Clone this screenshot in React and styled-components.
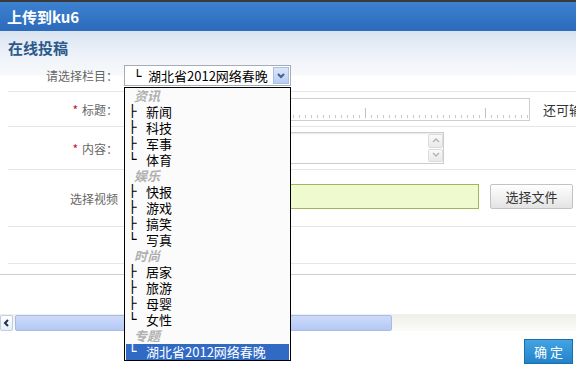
import React from 'react'
import styled, { createGlobalStyle } from 'styled-components'

const GlobalStyle = createGlobalStyle`
  html, body { margin: 0; padding: 0; background: #fff; overflow: hidden; }
  body { font-family: "Noto Sans CJK SC", "Noto Sans", sans-serif; font-size: 12px; color: #333; }
`

const Page = styled.div`
  width: 576px;
  height: 370px;
  overflow: hidden;
  box-sizing: border-box;
  border-top: 2px solid #3a3a3a;
`

const TitleBar = styled.div`
  height: 29px;
  display: flex;
  align-items: center;
  padding-left: 7px;
  background: linear-gradient(#3e81d1, #2c6abb);
  color: #fff;
  font-size: 15px;
  font-weight: bold;
`

const Body = styled.div`
  background: linear-gradient(#d8e3f1 0, #edf1f8 22px, #f8f9fb 44px, #fff 45px);
`

const SubTitle = styled.h2`
  margin: 0;
  height: 29px;
  box-sizing: border-box;
  padding: 3px 0 0 8px;
  display: flex;
  align-items: center;
  font-size: 15px;
  font-weight: bold;
  color: #2c5a8c;
`

const Row = styled.div`
  margin-left: 8px;
  height: ${p => p.$h}px;
  display: flex;
  align-items: center;
  border-bottom: 1px solid #e6e6e6;
  white-space: nowrap;
`

const Label = styled.label`
  flex: none;
  width: 116px;
  box-sizing: border-box;
  padding-right: 6px;
  text-align: right;
  color: #666;
  font-size: 12px;
`

const Star = styled.span`
  color: #c8102e;
  margin-right: 4px;
`

const SelectWrap = styled.div`
  position: relative;
  width: 167px;
  height: 21px;
`

const SelectBox = styled.div`
  height: 100%;
  box-sizing: border-box;
  border: 1px solid #a5acb5;
  background: #fff;
  display: flex;
  align-items: center;
  padding-left: 6px;
  font-size: 13px;
  color: #000;
`

const SelectArrow = styled.div`
  margin-left: auto;
  margin-right: 1px;
  width: 16px;
  height: 17px;
  box-sizing: border-box;
  border: 1px solid #a9bfe6;
  background: linear-gradient(#dbe6fb, #b9cef5);
  display: flex;
  align-items: center;
  justify-content: center;
`

const Prefix = styled.span`
  display: inline-block;
  width: 9px;
  margin: 0 ${p => p.$gap}px 0 ${p => p.$left}px;
  font-family: "DejaVu Sans Mono", monospace;
  font-size: 14px;
  line-height: 14px;
  overflow: hidden;
  vertical-align: -1px;
`

const DropList = styled.div`
  position: absolute;
  top: calc(100% + 1px);
  left: 0;
  z-index: 10;
  width: 167px;
  box-sizing: border-box;
  border: 1px solid #000;
  background: #fbfbfb;
`

const Group = styled.div`
  height: 16px;
  line-height: 16px;
  padding-left: 9px;
  font-size: 13px;
  font-style: italic;
  font-weight: bold;
  color: #b0b0b0;
`

const Option = styled.div`
  height: 16px;
  line-height: 16px;
  padding-left: 2px;
  margin: 0 1px;
  font-size: 13px;
  color: ${p => (p.$selected ? '#fff' : '#000')};
  background: ${p => (p.$selected ? '#316ac5' : 'transparent')};
`

const TitleInput = styled.div`
  flex: none;
  width: 406px;
  height: 23px;
  box-sizing: border-box;
  border: 1px solid #cfcfcf;
  background:
    repeating-linear-gradient(to right, #c2c2c2 0 1px, transparent 1px 120px) left 0 bottom 2px / 100% 10px no-repeat,
    repeating-linear-gradient(to right, #c9c9c9 0 1px, transparent 1px 6px) left 0 bottom 2px / 100% 3px no-repeat,
    #fff;
`

const Counter = styled.span`
  margin-left: 13px;
  font-size: 13px;
  color: #333;
`

const TextBox = styled.div`
  flex: none;
  width: 320px;
  height: 32px;
  box-sizing: border-box;
  border: 1px solid #cdcdcd;
  box-shadow: inset 0 1px 2px #e6e6e6;
  display: flex;
  flex-direction: column;
  align-items: flex-end;
  gap: 1px;
  padding: 1px 0;
`

const SpinBtn = styled.div`
  width: 15px;
  height: 14px;
  box-sizing: border-box;
  border: 1px solid #dcdcdc;
  border-radius: 2px;
  background: linear-gradient(#fafafa, #e9e9e9);
  display: flex;
  align-items: center;
  justify-content: center;
`

const FileInput = styled.div`
  flex: none;
  width: 355px;
  height: 25px;
  box-sizing: border-box;
  border: 1px solid #9db85c;
  background: #effbcf;
  margin-top: -3px;
`

const FileButton = styled.button`
  flex: none;
  width: 83px;
  height: 25px;
  margin: -3px 0 0 11px;
  border: 1px solid #c3c3c3;
  border-radius: 2px;
  background: linear-gradient(#fff, #e3e3e3);
  font-family: inherit;
  font-size: 13px;
  color: #333;
  padding: 0;
`

const Spacer = styled.div`
  height: ${p => p.$h}px;
`

const Rule = styled.div`
  height: 1px;
  background: #cfcfcf;
`

const HScroll = styled.div`
  display: flex;
  align-items: center;
  gap: 2px;
  height: 17px;
  background: linear-gradient(#efefe8, #fbfbf8);
`

const ScrollBtn = styled.div`
  width: 13px;
  height: 16px;
  box-sizing: border-box;
  border: 1px solid #c0cde6;
  border-radius: 2px;
  background: linear-gradient(#fff, #e8edf7);
  display: flex;
  align-items: center;
  justify-content: center;
`

const Thumb = styled.div`
  width: ${p => p.$w}px;
  height: 16px;
  box-sizing: border-box;
  border: 1px solid #a5bbe9;
  border-radius: 2px;
  background: linear-gradient(#cddbfb, #b4c8f4);
`

const Footer = styled.div`
  display: flex;
  justify-content: flex-end;
  padding: 8px 3px 0 0;
`

const SubmitButton = styled.button`
  width: 49px;
  height: 25px;
  border: 1px solid #1c6eab;
  background: linear-gradient(#45a3e2, #2183cb);
  color: #fff;
  font-family: inherit;
  font-size: 13px;
  letter-spacing: 3px;
  padding: 0 0 0 3px;
`

const Chevron = ({ dir, color, w = 8, sw = 2 }) => {
  const pts = {
    down: '1,2 4,5 7,2',
    up: '1,5 4,2 7,5',
    left: '5,1 2,4 5,7',
  }[dir]
  return (
    <svg width={w} height={w} viewBox="0 0 8 8">
      <polyline points={pts} fill="none" stroke={color} strokeWidth={sw} />
    </svg>
  )
}

const groups = [
  { name: '资讯', items: ['新闻', '科技', '军事', '体育'] },
  { name: '娱乐', items: ['快报', '游戏', '搞笑', '写真'] },
  { name: '时尚', items: ['居家', '旅游', '母婴', '女性'] },
  { name: '专题', items: ['湖北省2012网络春晚'] },
]

export default function App() {
  return (
    <Page>
      <GlobalStyle />
      <TitleBar>上传到ku6</TitleBar>
      <Body>
        <SubTitle>在线投稿</SubTitle>
        <Row $h={31}>
          <Label>请选择栏目：</Label>
          <SelectWrap>
            <SelectBox>
              <Prefix $left={2} $gap={6}>└</Prefix>湖北省2012网络春晚
              <SelectArrow>
                <Chevron dir="down" color="#4a5f86" />
              </SelectArrow>
            </SelectBox>
            <DropList>
              {groups.map(g => (
                <React.Fragment key={g.name}>
                  <Group>{g.name}</Group>
                  {g.items.map((it, i) => (
                    <Option key={it} $selected={g.name === '专题'}>
                      <Prefix $left={0} $gap={9}>{i === g.items.length - 1 ? '└' : '├'}</Prefix>
                      {it}
                    </Option>
                  ))}
                </React.Fragment>
              ))}
            </DropList>
          </SelectWrap>
        </Row>
        <Row $h={34}>
          <Label><Star>*</Star>标题：</Label>
          <TitleInput />
          <Counter>还可输入80字</Counter>
        </Row>
        <Row $h={42}>
          <Label><Star>*</Star>内容：</Label>
          <TextBox>
            <SpinBtn><Chevron dir="up" color="#b5b5b5" w={8} sw={1.5} /></SpinBtn>
            <SpinBtn><Chevron dir="down" color="#b5b5b5" w={8} sw={1.5} /></SpinBtn>
          </TextBox>
        </Row>
        <Row $h={56}>
          <Label>选择视频</Label>
          <FileInput />
          <FileButton>选择文件</FileButton>
        </Row>
        <Row $h={36} />
        <Spacer $h={10} />
        <Rule />
        <Spacer $h={39} />
        <HScroll>
          <ScrollBtn><Chevron dir="left" color="#1f3356" w={8} sw={2} /></ScrollBtn>
          <Thumb $w={377} />
        </HScroll>
        <Footer>
          <SubmitButton>确定</SubmitButton>
        </Footer>
      </Body>
    </Page>
  )
}
